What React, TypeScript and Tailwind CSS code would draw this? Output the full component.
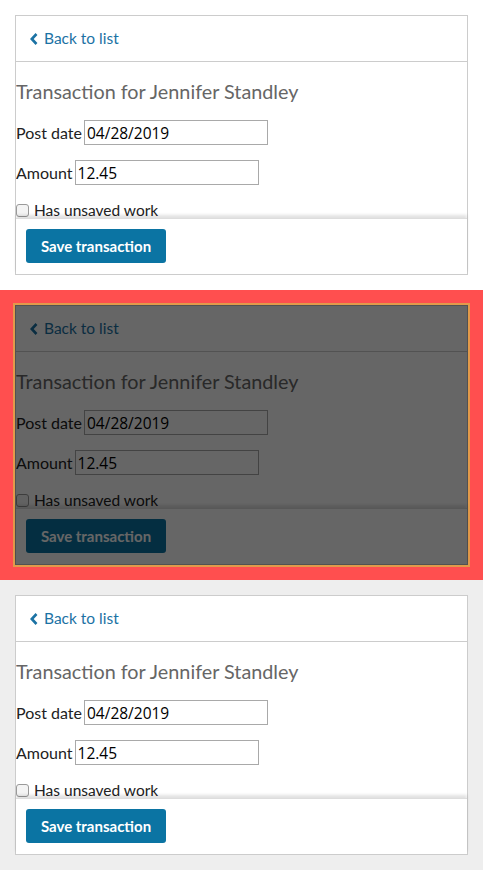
import React from "react";

function ChevronLeft() {
  return (
    <svg width="8" height="12" viewBox="0 0 8 12" className="shrink-0">
      <path d="M6.5 1 L1.8 6 L6.5 11" fill="none" stroke="currentColor" strokeWidth="2.6" strokeLinejoin="miter" />
    </svg>
  );
}

function TransactionCard() {
  return (
    <div className="flex h-[260px] flex-col border border-[#cccccc] bg-white">
      <div className="flex h-[46px] shrink-0 items-center border-b border-[#cccccc] pl-[14px]">
        <a href="#" className="flex items-center gap-[6px] text-[15.5px] text-[#1b72a4]">
          <ChevronLeft />
          <span>Back to list</span>
        </a>
      </div>

      <div className="h-[156px] shrink-0 overflow-hidden">
        <h1 className="mt-[18px] text-[19.8px] leading-[23px] text-[#666666]">
          Transaction for Jennifer Standley
        </h1>

        <div className="mt-[17px] flex items-center gap-[2px] text-[16px] text-[#222222]">
          <label htmlFor="post-date">Post date</label>
          <input
            id="post-date"
            defaultValue="04/28/2019"
            className="h-[25px] w-[184px] border border-[#a9a9a9] px-[2px] font-['Open_Sans'] text-[15.5px] text-black outline-none"
          />
        </div>

        <div className="mt-[15px] flex items-center gap-[2px] text-[16px] text-[#222222]">
          <label htmlFor="amount">Amount</label>
          <input
            id="amount"
            defaultValue="12.45"
            className="h-[25px] w-[184px] border border-[#a9a9a9] px-[2px] font-['Open_Sans'] text-[15.5px] text-black outline-none"
          />
        </div>

        <label className="mt-[15px] flex items-center gap-[5px] text-[15.5px] leading-[20px] text-[#222222]">
          <input
            type="checkbox"
            className="m-0 h-[13px] w-[13px] appearance-none rounded-[3px] border border-[#9a9a9a] bg-[#f4f4f4]"
          />
          <span>Has unsaved work</span>
        </label>
      </div>

      <div className="flex-1 border-t border-[#dddddd] px-[10px] pt-[10px] shadow-[0_-3px_3px_rgba(0,0,0,0.12)]">
        <button className="h-[34px] w-[140px] rounded-[3px] bg-[#0b74a3] text-[15px] font-bold text-white">
          Save transaction
        </button>
      </div>
    </div>
  );
}

export default function App() {
  return (
    <div className="w-[483px] font-['Lato',sans-serif]">
      <section className="bg-white p-[15px]">
        <TransactionCard />
      </section>

      <section className="bg-[#ff4f4f] p-[15px]">
        <div className="relative ring-2 ring-[#e29a4a]">
          <TransactionCard />
          <div className="absolute inset-0 bg-black/60" />
        </div>
      </section>

      <section className="bg-[#eeeeee] p-[15px]">
        <TransactionCard />
      </section>
    </div>
  );
}
